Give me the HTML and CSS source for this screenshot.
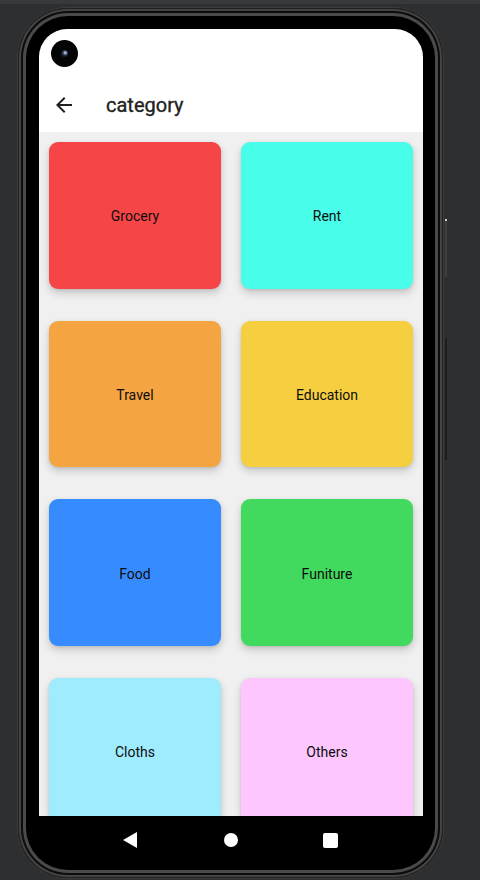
FILE: index.html
```html
<!DOCTYPE html>
<html lang="en">
<head>
<meta charset="utf-8">
<title>category</title>
<link rel="stylesheet" href="styles.css">
</head>
<body>
<div class="window-strip"></div>
<div class="phone">
  <span class="btn-volume"></span>
  <span class="btn-power"></span>
  <div class="screen">
    <div class="status-bar">
      <div class="camera"><span class="lens"></span></div>
    </div>
    <header class="app-bar">
      <svg class="back" viewBox="0 0 24 24" width="24" height="24" aria-hidden="true">
        <path d="M20 11H7.83l5.59-5.59L12 4l-8 8 8 8 1.41-1.41L7.83 13H20v-2z" fill="#1f1f1f"/>
      </svg>
      <h1 class="title">category</h1>
    </header>
    <main class="content">
      <div class="grid">
        <div class="card c-red">Grocery</div>
        <div class="card c-cyan">Rent</div>
        <div class="card c-orange">Travel</div>
        <div class="card c-yellow">Education</div>
        <div class="card c-blue">Food</div>
        <div class="card c-green">Funiture</div>
        <div class="card c-sky">Cloths</div>
        <div class="card c-pink">Others</div>
      </div>
    </main>
    <nav class="nav-bar">
      <svg class="nav-back" viewBox="0 0 14 16" width="14" height="16" aria-hidden="true">
        <path d="M0 8 L14 0 L14 16 Z" fill="#fff"/>
      </svg>
      <span class="nav-home"></span>
      <span class="nav-recent"></span>
    </nav>
  </div>
</div>
</body>
</html>
```
FILE: styles.css
```css
* { box-sizing: border-box; }
html, body { margin: 0; padding: 0; }
body {
  background: #2e2f31;
  width: 480px;
  height: 880px;
  overflow: hidden;
  font-family: Roboto, "Noto Sans", sans-serif;
}
.window-strip {
  height: 4px;
  background: #38393b;
}
.phone {
  position: relative;
  margin: 4px 0 0 18px;
  width: 425px;
  height: 870px;
  padding: 21px 20px 14px 21px;
  background: #000;
  border-radius: 50px;
  box-shadow:
    0 0 0 1px #3c3d3f,
    inset 0 0 0 1px #202020,
    inset 0 0 0 3px #444,
    inset 0 0 0 5px #0c0c0c,
    inset 0 0 0 8px #4a4a4a,
    inset 0 0 0 10px #000;
}
.btn-volume {
  position: absolute;
  left: 427px;
  top: 211px;
  width: 2px;
  height: 58px;
  background: #3e3f41;
  border-top: 2px solid #cfcfcf;
}
.btn-power {
  position: absolute;
  left: 427px;
  top: 330px;
  width: 2px;
  height: 122px;
  background: #1c1d1f;
}
.screen {
  width: 384px;
  height: 835px;
  border-radius: 28px 28px 24px 24px;
  overflow: hidden;
  display: flex;
  flex-direction: column;
  background: #000;
}
.status-bar {
  height: 47px;
  background: #fff;
  padding: 11px 0 0 12px;
  flex: none;
}
.camera {
  width: 27px;
  height: 27px;
  border-radius: 50%;
  background: #050505;
  display: flex;
  align-items: center;
  justify-content: center;
}
.lens {
  width: 7px;
  height: 7px;
  border-radius: 50%;
  background: radial-gradient(circle at 60% 40%, #9fb3d3 0 1px, #3b4a66 2px, #141a26 3.5px);
}
.app-bar {
  height: 56px;
  flex: none;
  background: #fff;
  display: flex;
  align-items: center;
  padding: 2px 0 0 13px;
}
.back { display: block; flex: none; margin-top: -1px; }
.title {
  margin: 0 0 0 30px;
  font-size: 20px;
  font-weight: 400;
  -webkit-text-stroke: 0.35px #1f1f1f;
  color: #1f1f1f;
  letter-spacing: 0;
}
.content {
  height: 684px;
  flex: none;
  background: #f0f0f0;
  overflow: hidden;
  padding: 10px 10px 0 10px;
}
.grid {
  display: grid;
  grid-template-columns: 172px 172px;
  column-gap: 20px;
  grid-auto-rows: 146.67px;
  row-gap: 32px;
}
.card {
  border-radius: 9px;
  display: flex;
  align-items: center;
  justify-content: center;
  padding-top: 2px;
  font-size: 14px;
  color: #0d0d0d;
  box-shadow: 0 4px 8px rgba(0, 0, 0, 0.18), 0 1px 3px rgba(0, 0, 0, 0.08);
}
.c-red { background: #f64547; }
.c-cyan { background: #48fdea; }
.c-orange { background: #f4a441; }
.c-yellow { background: #f6cf41; }
.c-blue { background: #368cff; }
.c-green { background: #41da5f; }
.c-sky { background: #9fecff; }
.c-pink { background: #fdc6fe; }
.nav-bar {
  height: 48px;
  flex: none;
  background: #000;
  display: flex;
  align-items: center;
  padding-left: 84px;
}
.nav-back { display: block; flex: none; }
.nav-home {
  margin-left: 87px;
  width: 14px;
  height: 14px;
  border-radius: 50%;
  background: #fff;
  flex: none;
}
.nav-recent {
  margin-left: 85px;
  width: 15px;
  height: 15px;
  border-radius: 2px;
  background: #fff;
  flex: none;
}
```
